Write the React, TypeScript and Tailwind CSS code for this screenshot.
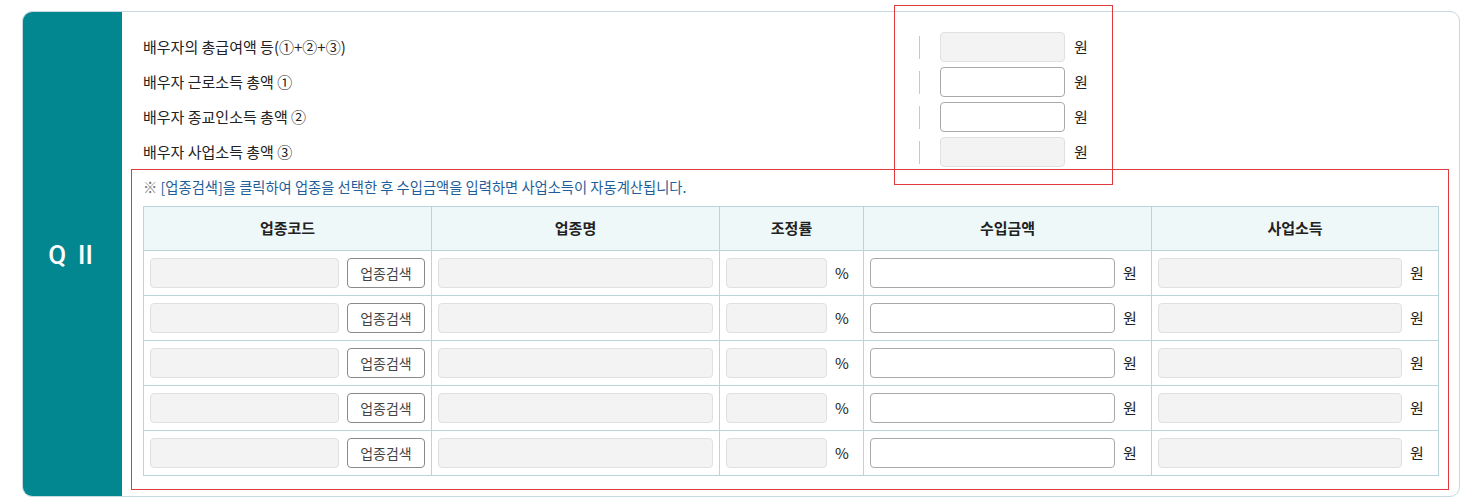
import React from "react";

const font = { fontFamily: '"Noto Sans CJK KR", "Noto Sans", sans-serif' };

const topRows = [
  { label: "배우자의 총급여액 등(①+②+③)", disabled: true },
  { label: "배우자 근로소득 총액 ①", disabled: false },
  { label: "배우자 종교인소득 총액 ②", disabled: false },
  { label: "배우자 사업소득 총액 ③", disabled: true },
];

function Field({ disabled, className = "" }: { disabled?: boolean; className?: string }) {
  return (
    <div
      className={`h-[30px] rounded-[4px] border ${
        disabled ? "border-[#e0e0e0] bg-[#f3f3f3]" : "border-[#a9a9a9] bg-white"
      } ${className}`}
    />
  );
}

function Unit({ children }: { children: React.ReactNode }) {
  return <span className="w-[30px] shrink-0 text-center text-[15px] text-[#222]">{children}</span>;
}

export default function App() {
  const rows = [0, 1, 2, 3, 4];
  return (
    <div className="relative min-h-[498px] bg-white pl-[22px] pr-[2px] pt-[11px]" style={font}>
      <div className="flex h-[486px] overflow-hidden rounded-[10px] border border-[#c4dade]">
        <div
          className="flex w-[99px] shrink-0 items-center justify-center gap-[12px] bg-[#02868f] pr-[4px] pt-[2px] text-white"
          style={{ fontFamily: "Roboto, Arial, sans-serif" }}
        >
          <span className="text-[26px] font-medium leading-none">Q</span>
          <span className="text-[26px] font-medium leading-none">II</span>
        </div>

        <div className="flex-1 pl-[9px] pr-[11px] pt-[20px]">
          <div className="flex flex-col gap-[5px] pl-[12px]">
            {topRows.map((r) => (
              <div key={r.label} className="flex h-[30px] items-center">
                <span className="w-[776px] text-[15px] text-[#222]">{r.label}</span>
                <span className="h-[23px] w-px bg-[#c8c8c8]" />
                <Field disabled={r.disabled} className="ml-[20px] w-[125px]" />
                <span className="ml-[9px] text-[15px] text-[#222]">원</span>
              </div>
            ))}
          </div>

          <div className="mt-[2px] border border-[#e0393e] pb-[13px] pl-[11px] pr-[9px] pt-[7px]">
            <p className="h-[20px] text-[14.3px] leading-[20px] text-[#1f5f99]">
              <span className="text-[#777]">※</span> [업종검색]을 클릭하여 업종을 선택한 후 수입금액을 입력하면 사업소득이 자동계산됩니다.
            </p>
            <table className="mt-[9px] w-[1295px] table-fixed border-collapse">
              <colgroup>
                <col className="w-[288px]" />
                <col className="w-[288px]" />
                <col className="w-[144px]" />
                <col className="w-[288px]" />
                <col className="w-[287px]" />
              </colgroup>
              <thead>
                <tr className="h-[44px] bg-[#eff8f8]">
                  {["업종코드", "업종명", "조정률", "수입금액", "사업소득"].map((h) => (
                    <th key={h} className="border border-[#b9d4da] text-[15px] font-bold text-[#222]">
                      {h}
                    </th>
                  ))}
                </tr>
              </thead>
              <tbody>
                {rows.map((i) => (
                  <tr key={i} className="h-[45px]">
                    <td className="border border-[#b9d4da] px-[6px]">
                      <div className="flex items-center gap-[8px]">
                        <Field disabled className="flex-1" />
                        <button className="h-[30px] w-[78px] rounded-[4px] border border-[#8a8a8a] bg-white text-[14px] text-[#444]">
                          업종검색
                        </button>
                      </div>
                    </td>
                    <td className="border border-[#b9d4da] px-[6px]">
                      <Field disabled className="w-full" />
                    </td>
                    <td className="border border-[#b9d4da] px-[6px]">
                      <div className="flex items-center">
                        <Field disabled className="flex-1" />
                        <Unit>%</Unit>
                      </div>
                    </td>
                    <td className="border border-[#b9d4da] px-[6px]">
                      <div className="flex items-center">
                        <Field className="flex-1" />
                        <Unit>원</Unit>
                      </div>
                    </td>
                    <td className="border border-[#b9d4da] px-[6px]">
                      <div className="flex items-center">
                        <Field disabled className="flex-1" />
                        <Unit>원</Unit>
                      </div>
                    </td>
                  </tr>
                ))}
              </tbody>
            </table>
          </div>
        </div>
      </div>

      <div className="pointer-events-none absolute left-[894px] top-[5px] h-[180px] w-[219px] border border-[#e0393e]" />
    </div>
  );
}
